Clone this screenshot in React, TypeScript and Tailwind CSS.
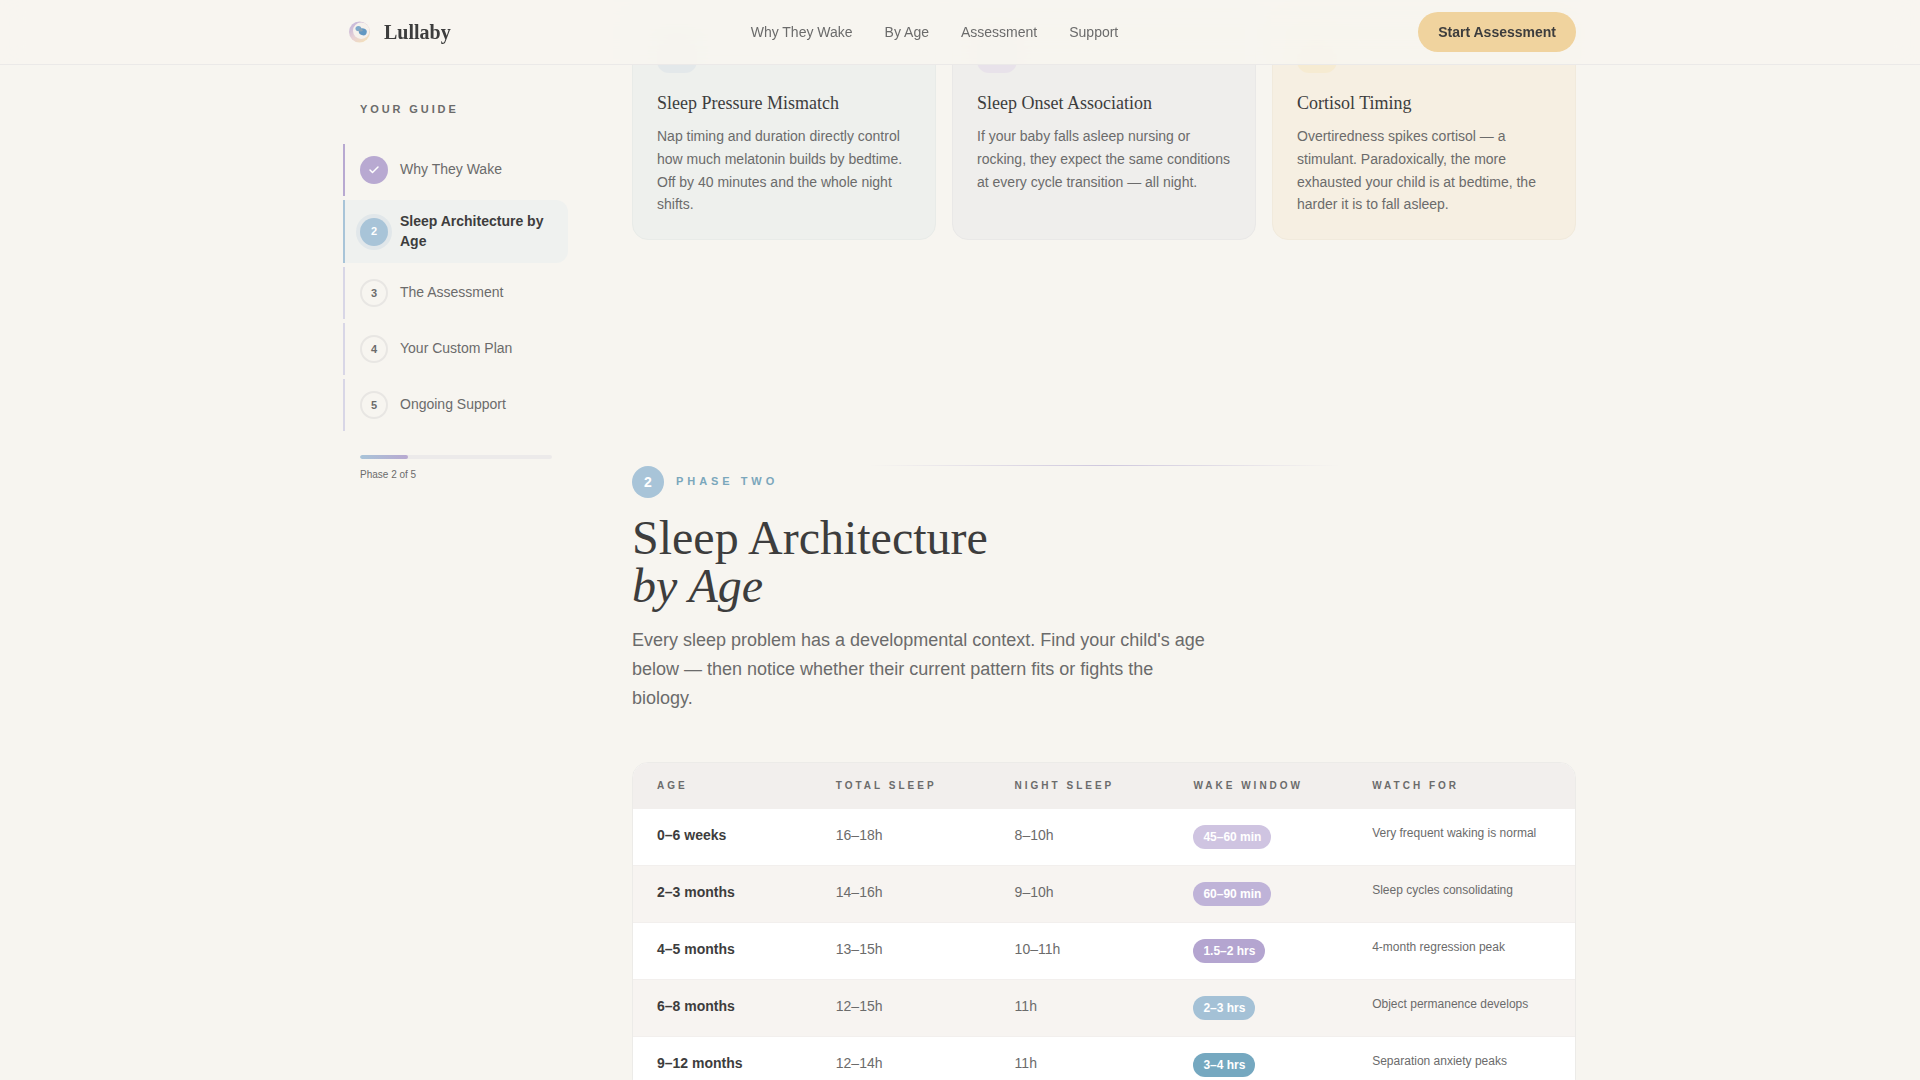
import React from "react";
import { Check } from "lucide-react";

const navLinks = ["Why They Wake", "By Age", "Assessment", "Support"];

const steps = [
  { n: "1", label: "Why They Wake", state: "done" },
  { n: "2", label: "Sleep Architecture by Age", state: "active" },
  { n: "3", label: "The Assessment", state: "todo" },
  { n: "4", label: "Your Custom Plan", state: "todo" },
  { n: "5", label: "Ongoing Support", state: "todo" },
];

const cards = [
  {
    title: "Sleep Pressure Mismatch",
    body: "Nap timing and duration directly control how much melatonin builds by bedtime. Off by 40 minutes and the whole night shifts.",
    card: "bg-[#eef0ed] border-[#e8ebe8]",
    icon: "bg-[#e3e8ea]",
  },
  {
    title: "Sleep Onset Association",
    body: "If your baby falls asleep nursing or rocking, they expect the same conditions at every cycle transition — all night.",
    card: "bg-[#efeeec] border-[#e9e8e7]",
    icon: "bg-[#e8e2ea]",
  },
  {
    title: "Cortisol Timing",
    body: "Overtiredness spikes cortisol — a stimulant. Paradoxically, the more exhausted your child is at bedtime, the harder it is to fall asleep.",
    card: "bg-[#f6efe2] border-[#f1eadc]",
    icon: "bg-[#f6ebd2]",
  },
];

const rows = [
  { age: "0–6 weeks", total: "16–18h", night: "8–10h", wake: "45–60 min", badge: "bg-[#cfc4e1]", watch: "Very frequent waking is normal" },
  { age: "2–3 months", total: "14–16h", night: "9–10h", wake: "60–90 min", badge: "bg-[#bfb3d8]", watch: "Sleep cycles consolidating" },
  { age: "4–5 months", total: "13–15h", night: "10–11h", wake: "1.5–2 hrs", badge: "bg-[#b4a5d0]", watch: "4-month regression peak" },
  { age: "6–8 months", total: "12–15h", night: "11h", wake: "2–3 hrs", badge: "bg-[#a4c1d6]", watch: "Object permanence develops" },
  { age: "9–12 months", total: "12–14h", night: "11h", wake: "3–4 hrs", badge: "bg-[#75a8c0]", watch: "Separation anxiety peaks" },
];

const headers = ["AGE", "TOTAL SLEEP", "NIGHT SLEEP", "WAKE WINDOW", "WATCH FOR"];

function Logo() {
  return (
    <svg width="32" height="32" viewBox="0 0 32 32" aria-hidden="true">
      <defs>
        <linearGradient id="moon" x1="0.1" y1="0.1" x2="0.75" y2="0.95">
          <stop offset="0" stopColor="#c4b6da" />
          <stop offset="0.55" stopColor="#e8d2d6" />
          <stop offset="1" stopColor="#f3dfbc" />
        </linearGradient>
        <filter id="soft" x="-20%" y="-20%" width="140%" height="140%">
          <feGaussianBlur stdDeviation="0.5" />
        </filter>
      </defs>
      <g filter="url(#soft)">
        <circle cx="15.5" cy="16" r="10.5" fill="url(#moon)" />
        <circle cx="17.2" cy="14.8" r="8.2" fill="#f6f1ec" />
        <ellipse cx="14.4" cy="12.6" rx="2.9" ry="2.6" fill="#7fa9ca" />
        <ellipse cx="18.8" cy="15.8" rx="4" ry="3.4" fill="#6498c2" transform="rotate(20 18.8 15.8)" />
        <ellipse cx="16.6" cy="14.2" rx="2" ry="1.4" fill="#8aa3b5" />
      </g>
    </svg>
  );
}

function Step({ n, label, state }: { n: string; label: string; state: string }) {
  const active = state === "active";
  const done = state === "done";
  const border = done ? "border-[#b8a9d1]" : active ? "border-[#a8c4d8]" : "border-[#d8d6e6]";
  const circle = done
    ? "bg-[#b8a9d1] text-white"
    : active
      ? "bg-[#a8c4d8] text-white shadow-[0_0_0_4px_rgba(168,196,216,0.2)]"
      : "border-2 border-[#e8e6e3] text-[#6b6b6b]";
  return (
    <li className={`-ml-px flex items-center gap-3 rounded-r-xl border-l-2 py-3 pl-[15px] pr-4 ${border} ${active ? "bg-[#eff1ef]" : ""}`}>
      <span className={`flex h-7 w-7 shrink-0 items-center justify-center rounded-full text-[11px] font-bold ${circle}`}>
        {done ? <Check size={12} strokeWidth={3} /> : n}
      </span>
      <span className={`text-sm leading-[19.5px] ${active ? "font-semibold text-[#3d3d3d]" : "text-[#6b6b6b]"}`}>{label}</span>
    </li>
  );
}

export default function App() {
  return (
    <div className="relative h-screen overflow-hidden bg-[#f7f5f0] font-['Liberation_Sans',sans-serif] text-[#3d3d3d]">
      <header className="absolute inset-x-0 top-0 z-10 h-[65px] border-b border-[#ebe9e8] bg-[#f7f5f0]/90 backdrop-blur-md">
        <div className="mx-auto flex h-16 max-w-[1280px] items-center justify-between px-6">
          <div className="flex items-center gap-2">
            <Logo />
            <span className="font-['Liberation_Serif',serif] text-xl font-bold text-[#3d3d3d]">Lullaby</span>
          </div>
          <nav className="flex items-center gap-8 text-sm text-[#6b6b6b]">
            {navLinks.map((l) => (
              <span key={l}>{l}</span>
            ))}
          </nav>
          <button className="h-10 rounded-full bg-[#f0d39e] px-5 text-sm font-bold text-[#3d3d3d]">Start Assessment</button>
        </div>
      </header>

      <div className="mx-auto flex max-w-[1280px] gap-16 px-6">
        <aside className="w-56 shrink-0 pt-[103px]">
          <p className="pl-4 text-[11px] font-bold leading-[13px] tracking-[2.9px] text-[#6b6b6b]">YOUR GUIDE</p>
          <ol className="mt-[28px] flex flex-col gap-1">
            {steps.map((s) => (
              <Step key={s.n} {...s} />
            ))}
          </ol>
          <div className="mt-6 pl-4 pr-4">
            <div className="h-1 overflow-hidden rounded-full bg-[#eceaea]">
              <div className="h-full w-1/4 rounded-full bg-gradient-to-r from-[#a8c4d8] to-[#b8a9d1]" />
            </div>
            <p className="mt-[9px] text-[10px] leading-[14px] text-[#6b6b6b]">Phase 2 of 5</p>
          </div>
        </aside>

        <main className="min-w-0 flex-1 pt-2">
          <div className="grid grid-cols-3 gap-4">
            {cards.map((c) => (
              <div key={c.title} className={`rounded-2xl border px-6 pb-[23px] pt-6 ${c.card}`}>
                <div className={`mb-4 h-10 w-10 rounded-xl ${c.icon}`} />
                <h3 className="mb-2 font-['Liberation_Serif',serif] text-lg font-normal leading-7 text-[#3d3d3d]">{c.title}</h3>
                <p className="text-sm leading-[22.75px] text-[#6b6b6b]">{c.body}</p>
              </div>
            ))}
          </div>

          <section className="mt-[225px]">
            <div className="mx-auto h-px w-[472px] bg-gradient-to-r from-transparent via-[#cfc8de] to-transparent" />
            <div className="flex items-center gap-3">
              <span className="flex h-8 w-8 items-center justify-center rounded-full bg-[#a8c4d8] text-sm font-bold text-white">2</span>
              <span className="pb-0.5 text-[11px] font-bold tracking-[3.95px] text-[#7ba7bc]">PHASE TWO</span>
            </div>
            <h2 className="mt-4 font-['Liberation_Serif',serif] text-5xl font-normal leading-[48px] text-[#3d3d3d]">
              Sleep Architecture
              <br />
              <em>by Age</em>
            </h2>
            <p className="mt-4 max-w-xl text-lg leading-[29px] text-[#6b6b6b]">
              Every sleep problem has a developmental context. Find your child's age below — then notice whether their current pattern fits or fights the biology.
            </p>

            <div className="mt-[49px] overflow-hidden rounded-2xl border border-[#ecebe8] bg-white">
              <div className="grid grid-cols-5 bg-[#f2efed] px-6 py-4">
                {headers.map((h) => (
                  <span key={h} className="text-[10px] font-bold leading-[14px] tracking-[0.3em] text-[#6b6b6b]">
                    {h}
                  </span>
                ))}
              </div>
              {rows.map((r, i) => (
                <div key={r.age} className={`grid grid-cols-5 items-start border-b border-[#f2efed] px-6 py-4 ${i % 2 ? "bg-[#f7f4f1]" : "bg-white"}`}>
                  <span className="text-sm font-semibold leading-5 text-[#3d3d3d]">{r.age}</span>
                  <span className="text-sm leading-5 text-[#6b6b6b]">{r.total}</span>
                  <span className="text-sm leading-5 text-[#6b6b6b]">{r.night}</span>
                  <span className="flex">
                    <span className={`flex h-6 items-center rounded-full px-[10px] text-xs font-semibold text-white ${r.badge}`}>{r.wake}</span>
                  </span>
                  <span className="text-xs leading-4 text-[#6b6b6b]">{r.watch}</span>
                </div>
              ))}
            </div>
          </section>
        </main>
      </div>
    </div>
  );
}
